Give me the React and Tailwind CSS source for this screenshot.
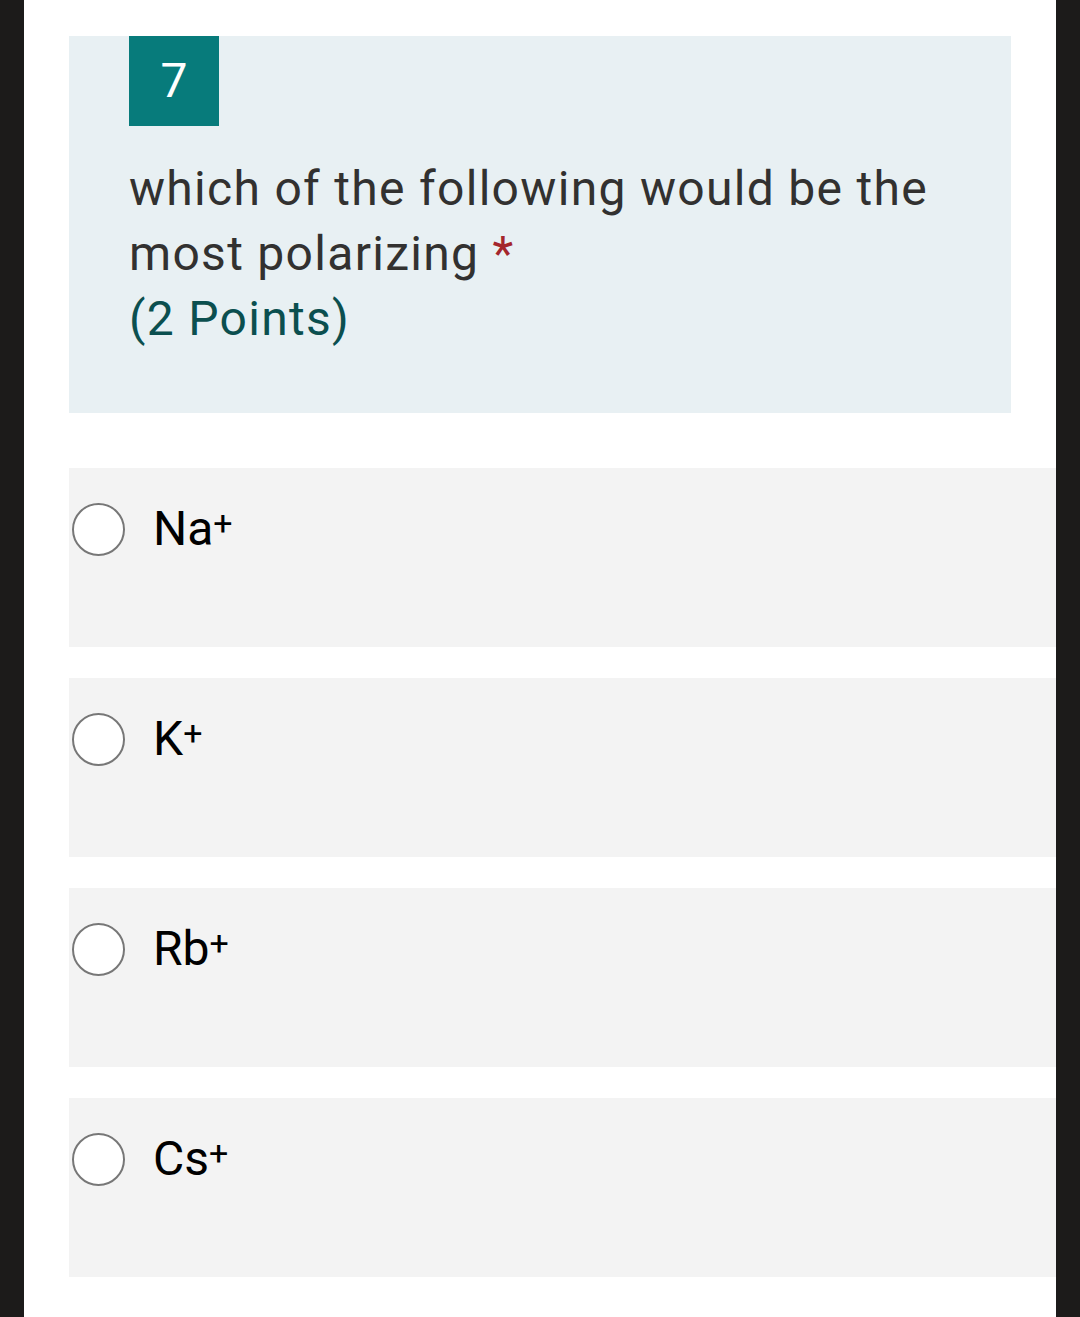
import React from "react";

const options = ["Na", "K", "Rb", "Cs"];

const Option = ({ label }) => (
  <label className="flex h-[179px] w-full bg-[#f3f3f3] pl-[3px] pt-[35px]">
    <span className="block h-[53px] w-[53px] shrink-0 rounded-full border-[2.5px] border-[#777777] bg-white" />
    <span className="ml-[28px] mt-[-7px] h-[65px] text-[48px] leading-[65px] text-black">
      {label}
      <span className="align-[10px] text-[34px] leading-none">+</span>
    </span>
  </label>
);

const App = () => {
  return (
    <div
      className="flex h-[1317px] w-[1080px] bg-[#1c1b1a]"
      style={{ fontFamily: "Roboto, 'Noto Sans', Arial, sans-serif" }}
    >
      <div className="ml-[24px] flex h-full w-[1032px] flex-col bg-white pl-[45px] pt-[36px]">
        <div className="h-[377px] w-[942px] bg-[#e8f0f3] pl-[60px] pr-[60px]">
          <div className="flex h-[90px] w-[90px] items-center justify-center bg-[#077b7b] text-[48px] text-white">
            7
          </div>
          <div className="mt-[30px] text-[48px] leading-[65px] tracking-[1.3px] text-[#323130]">
            which of the following would be the most polarizing{" "}
            <span className="text-[#a4262c]">*</span>
          </div>
          <div className="text-[48px] leading-[65px] tracking-[1.3px] text-[#0b4f4f]">(2 Points)</div>
        </div>
        <div className="mt-[55px] flex flex-col gap-[31px]">
          {options.map((o) => (
            <Option key={o} label={o} />
          ))}
        </div>
      </div>
    </div>
  );
};

export default App;
